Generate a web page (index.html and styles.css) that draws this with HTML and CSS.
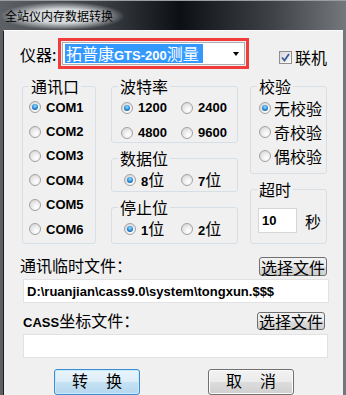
FILE: index.html
```html
<!DOCTYPE html>
<html lang="zh-CN">

<head>
    <meta charset="UTF-8">
    <title>全站仪内存数据转换</title>
    <link rel="stylesheet" href="styles.css">
</head>

<body>
    <div class="window">
        <div class="titlebar">
            <span class="title">全站仪内存数据转换</span>
        </div>
        <div class="client">
            <div class="top-row">
                <span class="label">仪器:</span>
                <div class="picker">
                    <div class="combo">
                        <span class="selected">拓普康<b class="en">GTS-200</b>测量</span>
                        <span class="arrow"></span>
                    </div>
                </div>
                <label class="check">
                    <span class="checkbox">
                        <svg width="9" height="9" viewBox="0 0 9 9">
                            <path d="M1 4.5 L3.5 7.5 L8 1" fill="none" stroke="#3d5a9a" stroke-width="1.8" />
                        </svg>
                    </span>
                    联机
                </label>
            </div>

            <div class="groups">
                <fieldset class="group ports">
                    <legend>通讯口</legend>
                    <div class="list">
                        <div class="opt"><span class="radio on"></span><span class="en">COM1</span></div>
                        <div class="opt"><span class="radio"></span><span class="en">COM2</span></div>
                        <div class="opt"><span class="radio"></span><span class="en">COM3</span></div>
                        <div class="opt"><span class="radio"></span><span class="en">COM4</span></div>
                        <div class="opt"><span class="radio"></span><span class="en">COM5</span></div>
                        <div class="opt"><span class="radio"></span><span class="en">COM6</span></div>
                    </div>
                </fieldset>

                <div class="col-mid">
                    <fieldset class="group baud">
                        <legend>波特率</legend>
                        <div class="grid">
                            <div class="opt"><span class="radio on"></span><span class="en">1200</span></div>
                            <div class="opt"><span class="radio"></span><span class="en">2400</span></div>
                            <div class="opt"><span class="radio"></span><span class="en">4800</span></div>
                            <div class="opt"><span class="radio"></span><span class="en">9600</span></div>
                        </div>
                    </fieldset>
                    <fieldset class="group bits">
                        <legend>数据位</legend>
                        <div class="grid">
                            <div class="opt"><span class="radio on"></span><span class="mix"><b class="en">8</b>位</span></div>
                            <div class="opt"><span class="radio"></span><span class="mix"><b class="en">7</b>位</span></div>
                        </div>
                    </fieldset>
                    <fieldset class="group bits stop">
                        <legend>停止位</legend>
                        <div class="grid">
                            <div class="opt"><span class="radio on"></span><span class="mix"><b class="en">1</b>位</span></div>
                            <div class="opt"><span class="radio"></span><span class="mix"><b class="en">2</b>位</span></div>
                        </div>
                    </fieldset>
                </div>

                <div class="col-right">
                    <fieldset class="group parity">
                        <legend>校验</legend>
                        <div class="list">
                            <div class="opt"><span class="radio on"></span>无校验</div>
                            <div class="opt"><span class="radio"></span>奇校验</div>
                            <div class="opt"><span class="radio"></span>偶校验</div>
                        </div>
                    </fieldset>
                    <fieldset class="group timeout">
                        <legend>超时</legend>
                        <div class="timeout-row">
                            <input class="num en" type="text" value="10" readonly>
                            <span>秒</span>
                        </div>
                    </fieldset>
                </div>
            </div>

            <div class="file-row">
                <span>通讯临时文件：</span>
                <button class="pick">选择文件</button>
            </div>
            <input class="field en" type="text" value="D:\ruanjian\cass9.0\system\tongxun.$$$" readonly>

            <div class="file-row cass">
                <span><b class="en">CASS</b>坐标文件：</span>
                <button class="pick">选择文件</button>
            </div>
            <input class="field field2 en" type="text" value="" readonly>

            <div class="actions">
                <button class="btn default"><span>转</span><span>换</span></button>
                <button class="btn"><span>取</span><span>消</span></button>
            </div>
        </div>
    </div>
</body>

</html>
```

FILE: styles.css
```css
* {
    box-sizing: border-box;
}

body {
    margin: 0;
    font-family: "Noto Sans CJK SC", sans-serif;
    font-size: 16px;
    color: #000;
}

.en {
    font-family: "Liberation Sans", Arial, sans-serif;
    font-weight: bold;
    font-size: 13px;
}

.window {
    width: 346px;
    height: 395px;
    overflow: hidden;
    background: linear-gradient(90deg, #5d6165 0%, #3a3e42 30%, #0c0f13 52%, #3d4145 78%, #74787c 100%);
}

.titlebar {
    height: 30px;
    display: flex;
    align-items: center;
    border-top: 1px solid #9a9ea2;
}

.title {
    font-size: 12px;
    line-height: 12px;
    padding: 8px 12px 8px 5px;
    background: radial-gradient(ellipse closest-side, rgba(222, 225, 228, .95) 50%, rgba(222, 225, 228, 0) 100%);
}

.client {
    margin-left: 3px;
    width: 340px;
    height: 366px;
    background: #f0f0f0;
    border-left: 1px solid #1a1c1e;
    border-top: 1px solid #fbfbfb;
    padding: 7px 16px 0 16px;
    overflow: hidden;
}

/* 第一行 仪器 */
.top-row {
    display: flex;
    align-items: center;
    height: 31px;
}

.label {
    width: 39px;
    line-height: 16px;
}

.picker {
    flex: none;
    width: 191px;
    height: 31px;
    border: 3px solid #f23c3c;
    padding: 1px;
}

.combo {
    height: 100%;
    display: flex;
    align-items: center;
    background: #fff;
    border: 1px solid #abadb3;
    padding-left: 2px;
}

.selected {
    height: 19px;
    line-height: 19px;
    padding: 0 4px 0 1px;
    background: #3399ff;
    color: #fff;
    white-space: nowrap;
}

.arrow {
    margin-left: auto;
    margin-right: 5px;
    border-style: solid;
    border-width: 4px 3.5px 0 3.5px;
    border-color: #000 transparent transparent;
}

.check {
    flex: none;
    display: flex;
    align-items: center;
    gap: 3px;
    margin-left: 30px;
    margin-top: 7px;
    line-height: 16px;
    white-space: nowrap;
}

.checkbox {
    width: 13px;
    height: 13px;
    border: 1px solid #8f8f8f;
    background: linear-gradient(135deg, #d8d8d8, #fbfbfb);
    display: flex;
    align-items: center;
    justify-content: center;
}

/* 分组框 */
.groups {
    display: flex;
    align-items: flex-start;
    margin-top: 9px;
    padding-left: 2px;
}

.group {
    margin: 0;
    padding: 0;
    border: 1px solid #d5dfe5;
    border-radius: 3px;
    min-width: 0;
}

.group legend {
    margin-left: 6px;
    padding: 0 2px;
    line-height: 16px;
}

.opt {
    display: flex;
    align-items: center;
    gap: 5px;
    white-space: nowrap;
}

.mix {
    line-height: 16px;
}

.radio {
    flex: none;
    position: relative;
    width: 12px;
    height: 12px;
    border-radius: 50%;
    border: 1px solid #a2a2a2;
    background: radial-gradient(circle at 65% 70%, #ffffff 0, #f2f2f2 35%, #cdcdcd 100%);
}

.radio.on::after {
    content: "";
    position: absolute;
    left: 2px;
    top: 2px;
    width: 6px;
    height: 6px;
    border-radius: 50%;
    background: radial-gradient(circle at 50% 35%, #8fe0ff 0, #2a86d6 55%, #0b3f7a 100%);
}

.ports {
    width: 75px;
    height: 166px;
}

.ports .list {
    padding: 1px 0 0 6px;
}

.ports .opt {
    height: 24.4px;
}

.col-mid {
    margin-left: 15px;
    width: 129px;
    display: flex;
    flex-direction: column;
}

.grid {
    display: grid;
    grid-template-columns: 60px auto;
}

.baud {
    height: 65px;
}

.baud .grid {
    padding: 1px 0 0 9px;
}

.baud .opt {
    height: 25px;
}

.bits {
    margin-top: 7px;
    height: 42px;
}

.bits.stop {
    height: 45px;
}

.bits .grid {
    grid-template-columns: 57px auto;
    padding: 2px 0 0 12px;
}

.bits .opt {
    height: 24px;
}

.col-right {
    margin-left: 12px;
    width: 78px;
    display: flex;
    flex-direction: column;
}

.parity {
    height: 96px;
}

.parity .list {
    padding: 2px 0 0 8px;
}

.parity .opt {
    height: 24px;
    gap: 3px;
    line-height: 16px;
}

.timeout {
    margin-top: 7px;
    height: 63px;
}

.timeout-row {
    display: flex;
    align-items: center;
    gap: 8px;
    margin-top: 11px;
    padding-left: 7px;
}

.num {
    width: 39px;
    height: 25px;
    border: 1px solid #d6d6d6;
    background: #fff;
    padding: 0 0 0 3px;
    outline: none;
    color: #000;
}

/* 文件选择 */
.file-row {
    display: flex;
    justify-content: space-between;
    align-items: flex-start;
    margin-top: 13px;
    line-height: 16px;
}

.file-row.cass {
    margin-top: 9px;
    padding-left: 3px;
}

.pick {
    width: 68px;
    height: 19px;
    margin: 0;
    padding: 0;
    font-family: "Noto Sans CJK SC", sans-serif;
    font-size: 16px;
    line-height: 16px;
    color: #000;
    border: 1px solid #707070;
    border-radius: 3px;
    background: linear-gradient(#f2f2f2 0%, #ebebeb 50%, #dddddd 50%, #cfcfcf 100%);
}

.cass .pick {
    height: 18px;
    margin-right: 2px;
}

.field {
    display: block;
    margin: 3px 0 0 3px;
    width: 306px;
    height: 24px;
    border: 1px solid #e2e2e2;
    background: #fff;
    padding: 0 0 0 3px;
    outline: none;
    color: #000;
}

.field2 {
    width: 305px;
}

.actions {
    display: flex;
    gap: 68px;
    margin-top: 11px;
    padding-left: 34px;
}

.btn {
    width: 86px;
    height: 26px;
    margin: 0;
    padding: 0 0 4px;
    display: flex;
    align-items: center;
    justify-content: center;
    gap: 18px;
    font-family: "Noto Sans CJK SC", sans-serif;
    font-size: 16px;
    line-height: 16px;
    color: #000;
    border: 1px solid #707070;
    border-radius: 3px;
    background: linear-gradient(#f2f2f2 0%, #ebebeb 50%, #dddddd 50%, #cfcfcf 100%);
    box-shadow: inset 0 0 0 1px #fcfcfc;
}

.btn.default {
    border-color: #3c8ccf;
    background: linear-gradient(#eaf5fc 0%, #dcedf8 50%, #c6e2f4 50%, #b5d6ee 100%);
    box-shadow: inset 0 0 0 1px #c8ecff;
}
```
